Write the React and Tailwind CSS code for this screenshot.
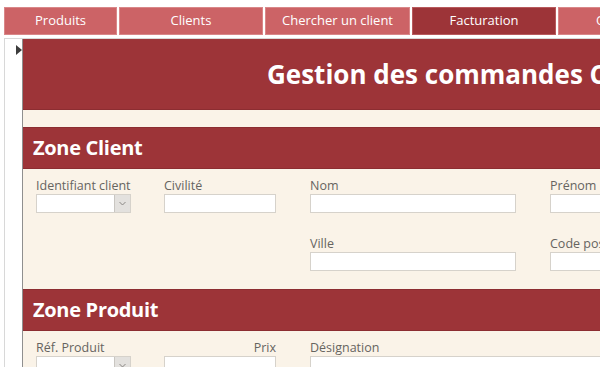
import React from 'react';

const tabs = [
  { label: 'Produits', width: 'w-[113px]' },
  { label: 'Clients', width: 'w-[144px]' },
  { label: 'Chercher un client', width: 'w-[145px]' },
  { label: 'Facturation', width: 'w-[144px]', active: true },
  { label: 'Opérations', width: 'w-[144px]' },
];

const Field = ({ label, combo, className = '', labelRight }) => (
  <div className={`flex flex-col ${className}`}>
    <span
      className={`text-[12.5px] leading-[16px] text-[#666460] ${labelRight ? 'text-right' : ''}`}
    >
      {label}
    </span>
    <div className="h-[19px] bg-white border border-[#d6d2cb] flex justify-end">
      {combo && (
        <div className="w-[16px] h-full bg-[#e3e1de] border-l border-[#c9c6c1] flex items-center justify-center">
          <svg width="7" height="5" viewBox="0 0 7 5">
            <path d="M0.5 1 L3.5 4 L6.5 1" fill="none" stroke="#8a8784" strokeWidth="1" />
          </svg>
        </div>
      )}
    </div>
  </div>
);

const SectionBar = ({ title }) => (
  <div className="h-[42px] bg-[#9d3438] border-y border-[#8c2d31] flex items-center pl-[10px]">
    <span className="text-white font-bold text-[20px] tracking-[-0.3px] leading-none">{title}</span>
  </div>
);

export default function App() {
  return (
    <div
      className="w-[600px] h-[367px] overflow-hidden bg-white"
      style={{ fontFamily: '"Open Sans", "Noto Sans", sans-serif' }}
    >
      {/* Tabs */}
      <div className="flex gap-[2px] pt-[7px] pl-[4px] w-[900px]">
        {tabs.map((t) => (
          <div
            key={t.label}
            className={`${t.width} h-[28px] shrink-0 flex items-center justify-center text-[13px] text-white border ${
              t.active ? 'bg-[#9d3438] border-[#b85a5d]' : 'bg-[#cc6366] border-[#d98789]'
            }`}
          >
            {t.label}
          </div>
        ))}
      </div>

      {/* Form body */}
      <div className="flex mt-[3px] ml-[4px] w-[900px] border-t border-[#d8d8d8]">
        <div className="w-[18px] shrink-0 border-l border-[#d8d8d8] bg-white pt-[6px] pl-[11px]">
          <svg width="6" height="10" viewBox="0 0 6 10">
            <path d="M0 0 L6 5 L0 10 Z" fill="#3c3c3c" />
          </svg>
        </div>
        <div className="flex-1 border-l border-[#8f8f8f] bg-[#faf3e8]">
          {/* Header */}
          <div className="h-[71px] bg-[#9d3438] border-b border-[#8c2d31] flex items-center pl-[244px]">
            <span className="text-white font-bold text-[26px] leading-none whitespace-nowrap">
              Gestion des commandes Clients
            </span>
          </div>
          <div className="h-[17px]" />

          <SectionBar title="Zone Client" />
          <div className="pl-[13px] pt-[9px] pb-[18px]">
            <div className="grid grid-cols-[94px_113px_207px_150px] gap-x-[33px]">
              <Field label="Identifiant client" combo className="mr-[-1px]" />
              <Field label="Civilité" className="ml-[1px]" />
              <Field label="Nom" className="ml-[1px]" />
              <Field label="Prénom" className="ml-[1px]" />
            </div>
            <div className="grid grid-cols-[94px_113px_207px_150px] gap-x-[33px] mt-[23px]">
              <div />
              <div />
              <Field label="Ville" className="ml-[1px]" />
              <Field label="Code postal" className="ml-[1px]" />
            </div>
          </div>

          <SectionBar title="Zone Produit" />
          <div className="pl-[13px] pt-[9px]">
            <div className="grid grid-cols-[94px_113px_207px_150px] gap-x-[33px]">
              <Field label="Réf. Produit" combo className="mr-[-1px]" />
              <Field label="Prix" labelRight className="ml-[1px]" />
              <div className="col-span-2 flex flex-col ml-[1px]">
                <span className="text-[12.5px] leading-[16px] text-[#666460]">Désignation</span>
                <div className="h-[19px] bg-white border border-[#d6d2cb]" />
              </div>
            </div>
          </div>
        </div>
      </div>
    </div>
  );
}
